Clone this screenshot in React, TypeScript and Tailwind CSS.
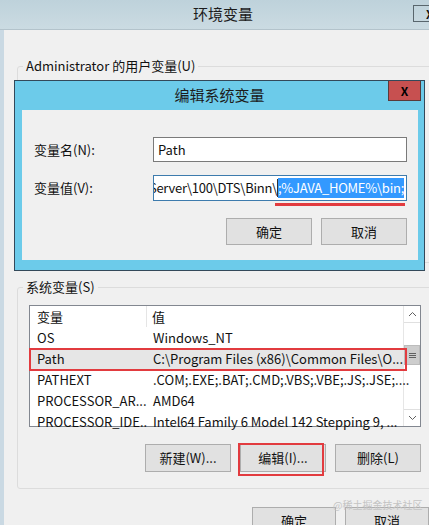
export default function App() {
  const rows = [
    ["OS", "Windows_NT"],
    ["Path", "C:\\Program Files (x86)\\Common Files\\O..."],
    ["PATHEXT", ".COM;.EXE;.BAT;.CMD;.VBS;.VBE;.JS;.JSE;...."],
    ["PROCESSOR_AR...", "AMD64"],
    ["PROCESSOR_IDE...", "Intel64 Family 6 Model 142 Stepping 9, ..."],
  ];
  const btn =
    "flex items-center justify-center w-[86px] bg-[#e1e1e1] border border-[#adadad] text-[13px]";
  return (
    <div className="relative w-[429px] h-[525px] overflow-hidden bg-[#cad9e3] font-['Noto_Sans_CJK_SC',sans-serif] text-[13px] text-[#111]">
      {/* outer title bar */}
      <div className="relative h-[30px] flex items-center pl-[193px] bg-gradient-to-b from-[#bed2db] to-[#cbdbe2] border-b border-[#b3c3cb]">
        <span className="text-[15px] text-[#1c1c1c]">环境变量</span>
        <div className="absolute left-[413px] top-[5px] w-[32px] h-[17px] border border-[#59666d] flex items-center pl-[12px] text-[12px] font-bold">
          X
        </div>
      </div>

      {/* outer body */}
      <div className="ml-[4px] h-[495px] bg-[#f0f0f0] flex flex-col">
        <fieldset className="mt-[27px] ml-[13px] w-[430px] h-[206px] border border-[#dcdcdc] rounded-[3px] shrink-0">
          <legend className="ml-[5px] px-[3px] leading-[18px]">Administrator 的用户变量(U)</legend>
        </fieldset>

        <fieldset className="mt-[15px] ml-[13px] w-[430px] border border-[#dcdcdc] rounded-[3px] shrink-0 pb-[16px]">
          <legend className="ml-[5px] px-[3px] leading-[18px]">系统变量(S)</legend>
          <div className="mt-[9px] ml-[11px] w-[392px] h-[122px] border border-[#828790] bg-white flex">
            <div className="relative flex-1 min-w-0 flex flex-col">
              <div className="flex h-[21px] shrink-0 items-center">
                <div className="w-[117px] h-full flex items-center pl-[7px] border-r border-[#e5e5e5]">变量</div>
                <div className="pl-[5px]">值</div>
              </div>
              {rows.map(([k, v]) => (
                <div
                  key={k}
                  className={`flex h-[21px] shrink-0 items-center whitespace-nowrap ${k === "Path" ? "bg-[#e6e6e6]" : ""}`}
                >
                  <div className="w-[117px] shrink-0 pl-[7px] overflow-hidden">{k}</div>
                  <div className="pl-[6px]">{v}</div>
                </div>
              ))}
              <div className="absolute left-[-1px] top-[42px] w-[378px] h-[23px] border-2 border-[#e23b3f]" />
            </div>
            <div className="w-[17px] shrink-0 flex flex-col bg-[#f0f0f0] border-l border-[#e6e6e6]">
              <div className="h-[17px] bg-white border-b border-[#e0e0e0] flex items-center justify-center">
                <svg width="9" height="6" viewBox="0 0 9 6">
                  <path d="M1 5 L4.5 1.5 L8 5" fill="none" stroke="#606060" strokeWidth="1" />
                </svg>
              </div>
              <div className="h-[22px] bg-white" />
              <div className="h-[20px] bg-[#cdcdcd] border border-[#bcbcbc] flex items-center justify-center">
                <svg width="9" height="7" viewBox="0 0 9 7">
                  <path d="M1 1.5H8M1 3.5H8M1 5.5H8" stroke="#606060" strokeWidth="1" />
                </svg>
              </div>
              <div className="flex-1 bg-white" />
              <div className="h-[17px] bg-white border-t border-[#e0e0e0] flex items-center justify-center">
                <svg width="9" height="6" viewBox="0 0 9 6">
                  <path d="M1 1 L4.5 4.5 L8 1" fill="none" stroke="#606060" strokeWidth="1" />
                </svg>
              </div>
            </div>
          </div>
          <div className="mt-[17px] ml-[127px] flex gap-[9px] h-[28px]">
            <div className={btn}>新建(W)...</div>
            <div className={`relative ${btn}`}>
              编辑(I)...
              <div className="absolute left-[-3px] top-[-2px] w-[86px] h-[33px] border-2 border-[#e23b3f]" />
            </div>
            <div className={btn}>删除(L)</div>
          </div>
        </fieldset>

        <div className="mt-[18px] ml-[248px] flex gap-[9px] h-[28px] shrink-0">
          <div className={btn}>确定</div>
          <div className={btn}>取消</div>
        </div>
      </div>

      {/* watermark */}
      <div className="absolute left-[333px] top-[497px] text-[10px] text-[#c4c4c4]">@稀土掘金技术社区</div>

      {/* edit dialog */}
      <div className="absolute left-[14px] top-[80px] w-[411px] h-[191px] border border-[#33495a] bg-[#6ccbea] flex flex-col">
        <div className="relative h-[29px] flex items-center justify-center shrink-0">
          <span className="text-[15px] text-[#1c1c1c]">编辑系统变量</span>
          <div className="absolute left-[373px] top-0 w-[33px] h-[20px] bg-[#c75050] border border-[#5a3a3a] border-t-0 flex items-center justify-center text-[12px] font-bold text-black">
            X
          </div>
        </div>
        <div className="ml-[7px] mr-[6px] h-[150px] bg-[#f0f0f0] flex flex-col">
          <div className="mt-[27px] flex items-center h-[25px]">
            <div className="pl-[12px] w-[131px] shrink-0">变量名(N):</div>
            <div className="w-[254px] h-full border border-[#7a7a7a] bg-white flex items-center pl-[4px]">Path</div>
          </div>
          <div className="mt-[13px] flex items-center h-[26px]">
            <div className="pl-[12px] w-[131px] shrink-0">变量值(V):</div>
            <div className="relative w-[254px] h-full">
              <div className="w-full h-full border border-[#3d7bad] bg-white flex items-center justify-end pr-[2px] overflow-hidden whitespace-nowrap tracking-[-0.25px]">
                <span className="shrink-0">L Server\100\DTS\Binn\</span>
                <span className="shrink-0 w-px h-[18px] bg-[#333]" />
                <span className="shrink-0 bg-[#3399ff] text-white h-[20px] flex items-center">;%JAVA_HOME%\bin;</span>
              </div>
              <div className="absolute right-[2px] top-full mt-[2px] w-[130px] h-[3px] bg-[#e23b3f]" />
            </div>
          </div>
          <div className="mt-[17px] ml-[204px] flex gap-[9px] h-[27px]">
            <div className={`${btn} border-[#3d7bad]`}>确定</div>
            <div className={btn}>取消</div>
          </div>
        </div>
      </div>
    </div>
  );
}
